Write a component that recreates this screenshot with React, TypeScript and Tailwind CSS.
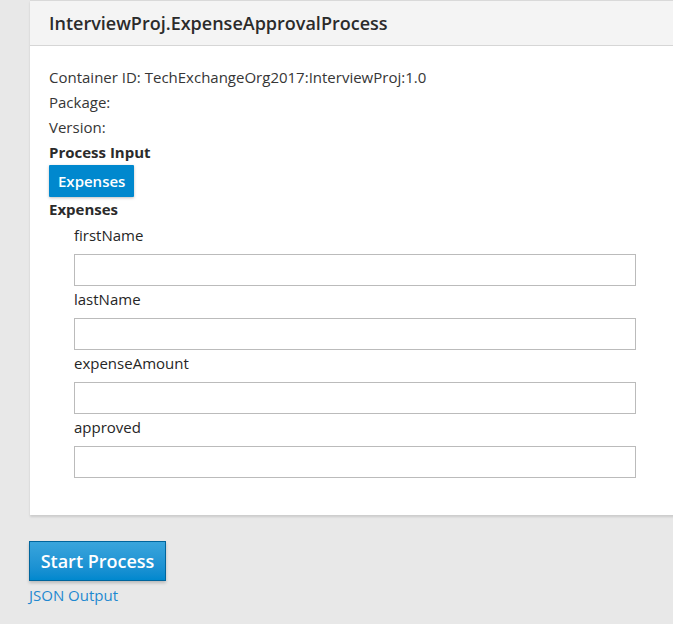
const fields = ['firstName', 'lastName', 'expenseAmount', 'approved'];

export default function App() {
  return (
    <div
      className="min-h-[624px] w-[673px] overflow-hidden bg-[#e8e8e8] text-[15px] text-[#363636]"
      style={{ fontFamily: '"Open Sans", "Liberation Sans", sans-serif' }}
    >
      <div className="ml-[30px] w-[680px] border-t border-[#d9d9d9] bg-white shadow-[0_2px_2px_rgba(0,0,0,0.12)]">
        <div className="flex h-[45px] items-center border-b border-[#d6d6d6] bg-[#f4f4f4] px-[19px]">
          <h2 className="text-[18px] font-semibold text-[#2b2b2b]">InterviewProj.ExpenseApprovalProcess</h2>
        </div>
        <div className="px-[19px] pb-[37px] pt-[19px]">
          <div className="leading-[25px]">Container ID: TechExchangeOrg2017:InterviewProj:1.0</div>
          <div className="leading-[25px]">Package:</div>
          <div className="leading-[25px]">Version:</div>
          <div className="font-bold leading-[25px] text-[#2b2b2b]">Process Input</div>
          <button className="h-[32px] rounded-[1px] bg-[#0088ce] px-[9px] font-semibold text-white shadow-[0_1px_3px_rgba(0,0,0,0.25)]">
            Expenses
          </button>
          <div className="font-bold leading-[25px] text-[#2b2b2b]">Expenses</div>
          <div className="pl-[25px]">
            {fields.map((f) => (
              <div key={f}>
                <label className="block pb-[9px] pt-[3px] leading-[20px] text-[#262626]">{f}</label>
                <input
                  type="text"
                  className="block h-[32px] w-[562px] border border-[#bbbbbb] bg-white px-2 outline-none"
                />
              </div>
            ))}
          </div>
        </div>
      </div>
      <div className="pl-[29px] pt-[26px]">
        <button className="h-[40px] w-[137px] border border-[#00659c] bg-gradient-to-b from-[#39a5dc] to-[#0088ce] text-[18px] font-semibold text-white shadow-[0_2px_3px_rgba(0,0,0,0.2)]">
          Start Process
        </button>
        <div className="mt-[4px] leading-[20px]">
          <a href="#" className="text-[#1e88d0]">JSON Output</a>
        </div>
      </div>
    </div>
  );
}
